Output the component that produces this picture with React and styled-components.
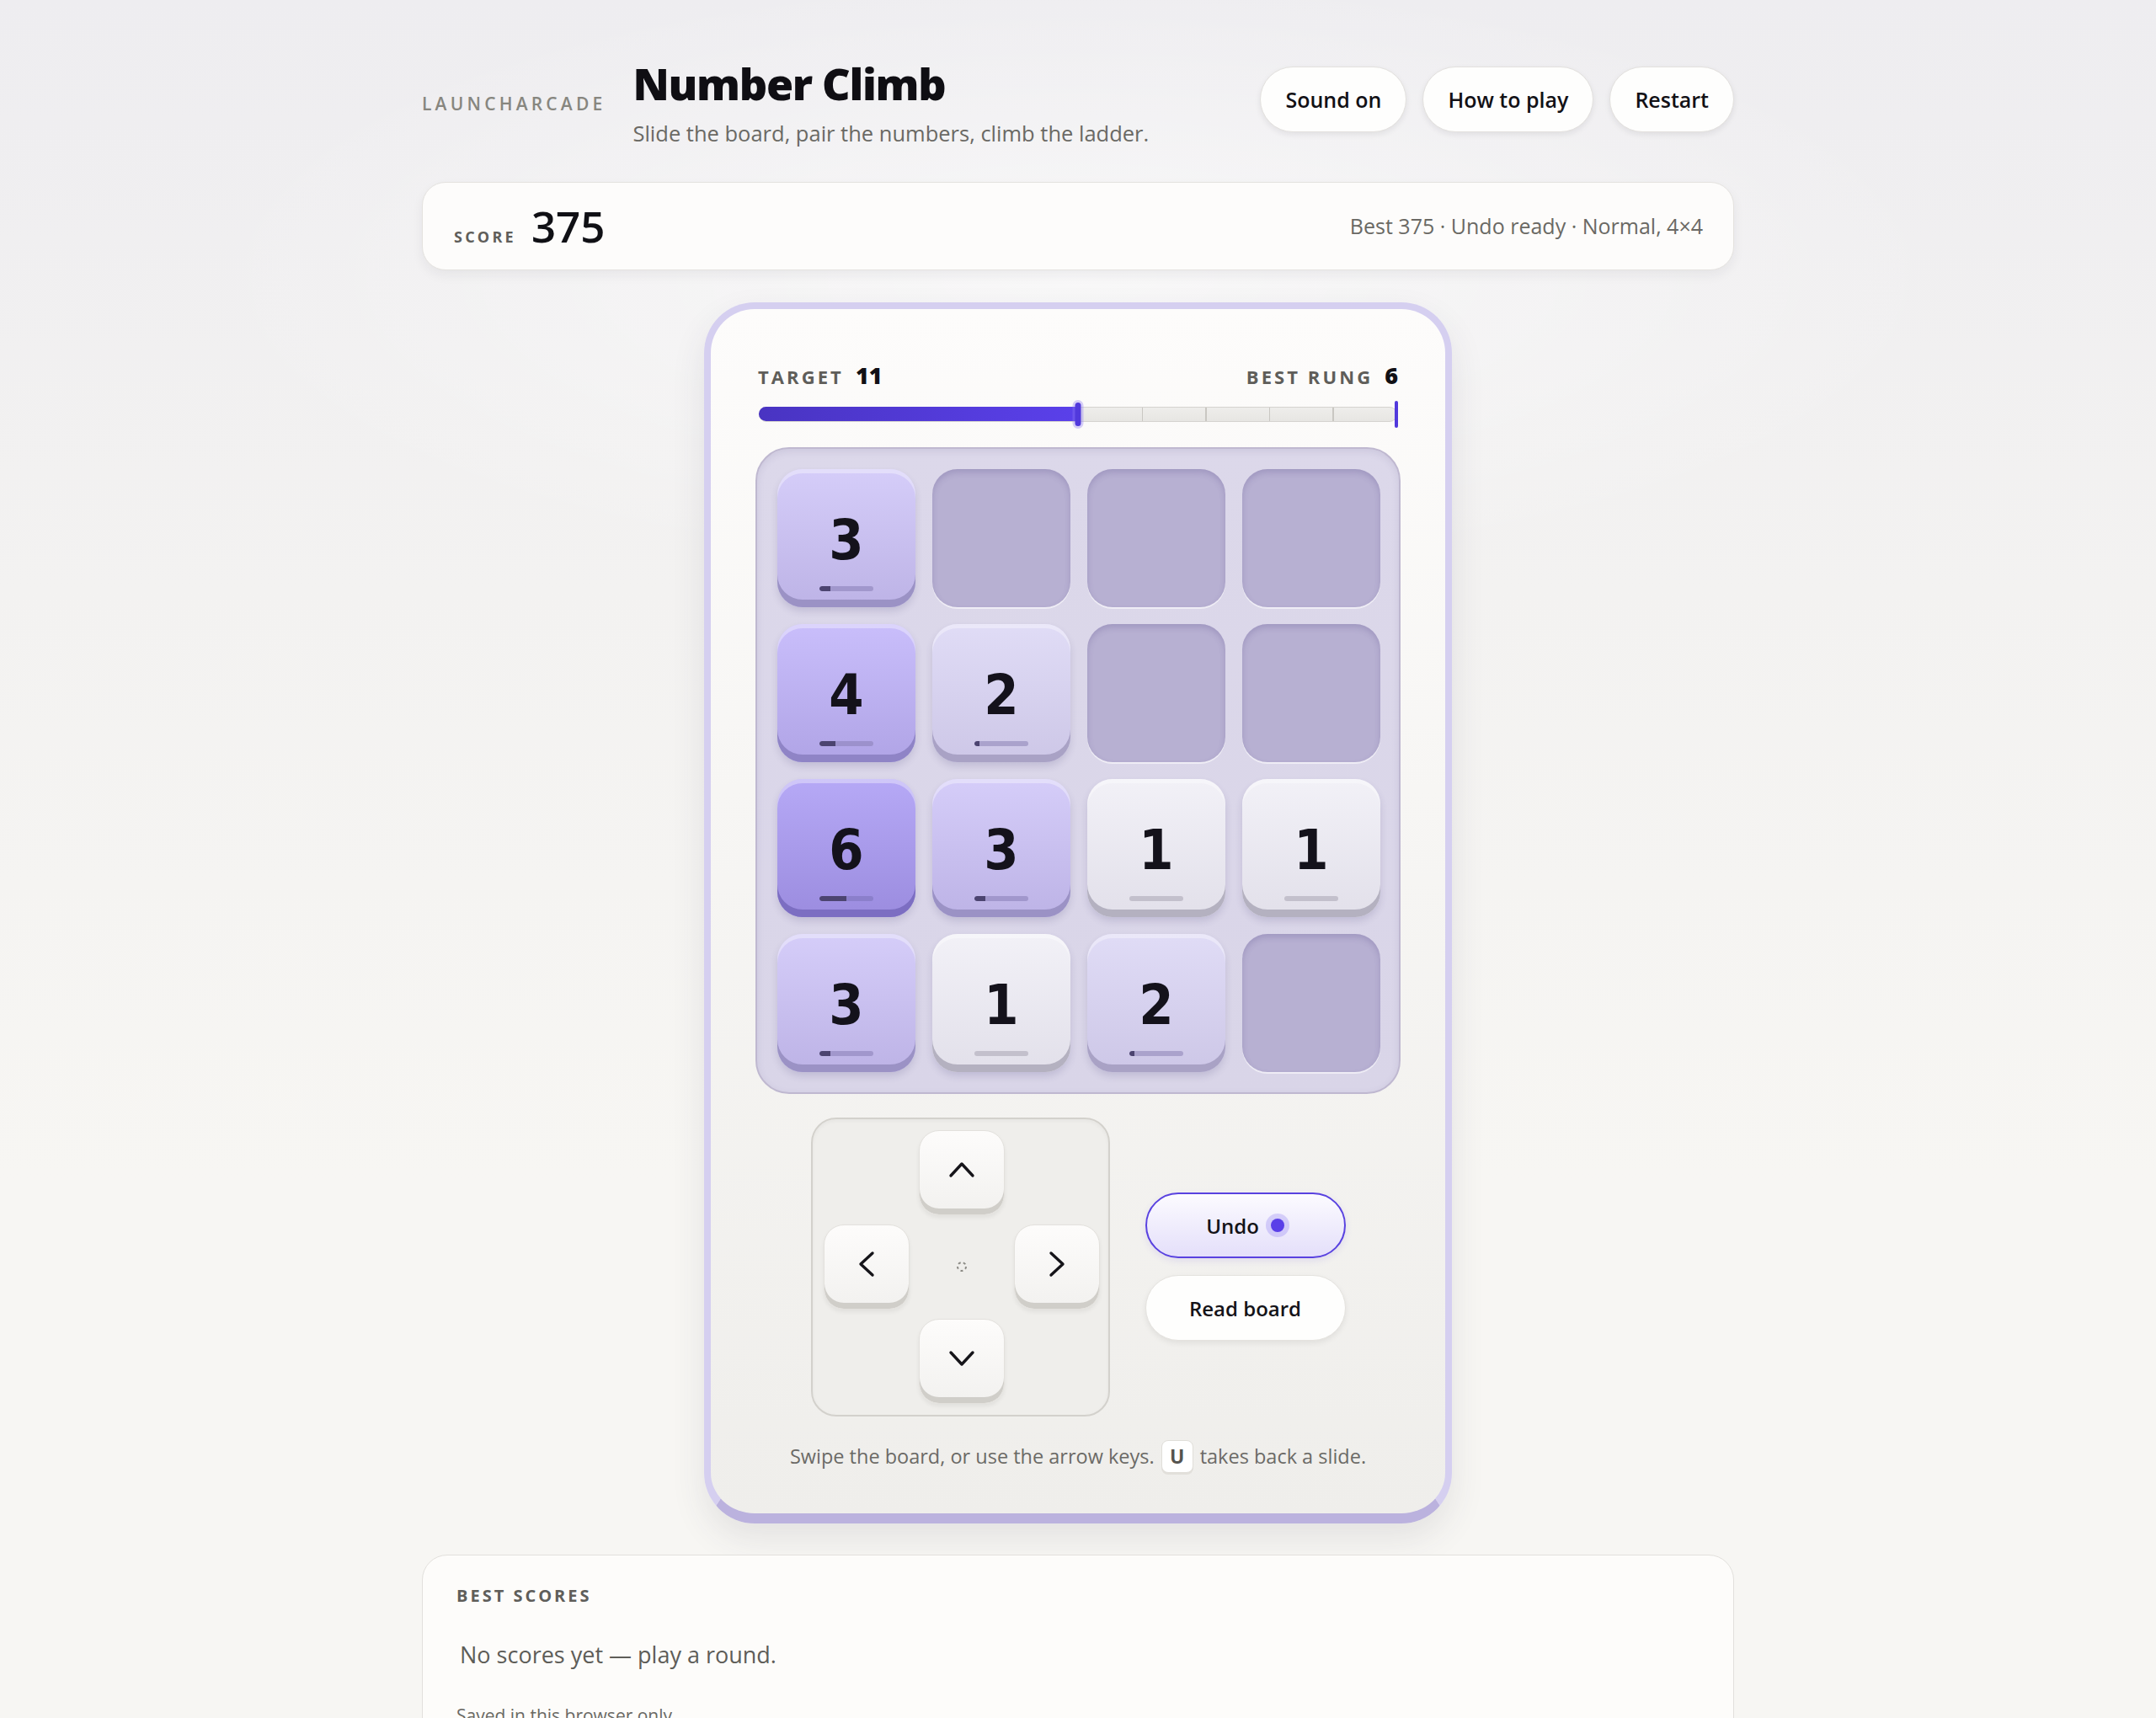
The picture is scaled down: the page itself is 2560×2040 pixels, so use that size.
import React from "react";
import styled, { createGlobalStyle, css } from "styled-components";

const GlobalStyle = createGlobalStyle`
  * { box-sizing: border-box; }
  body {
    margin: 0;
    font-family: "Open Sans", "Noto Sans", sans-serif;
    color: #141318;
    background:
      radial-gradient(ellipse 1500px 520px at 50% 330px, rgba(255, 255, 255, 0.55), rgba(255, 255, 255, 0) 70%),
      linear-gradient(180deg, #eeedf0 0px, #f3f2f1 700px, #f7f6f3 1400px);
    min-height: 2040px;
  }
`;

// value -> face gradient + lip colour
const tileTones = {
  1: { top: "#f2f1f7", bottom: "#e2e0ea", lip: "#b4b1c0", track: "#c3c0cc" },
  2: { top: "#e0dcf6", bottom: "#cdc7e7", lip: "#a9a2c5", track: "#aaa2cc" },
  3: { top: "#d5cdf9", bottom: "#bdb3e6", lip: "#9b92c5", track: "#a197cc" },
  4: { top: "#c9befb", bottom: "#b0a4e6", lip: "#8f84c6", track: "#9c91cc" },
  6: { top: "#b6a9f6", bottom: "#9b8cdf", lip: "#7c6ec2", track: "#8b7fcb" },
};

const board = [
  [3, 0, 0, 0],
  [4, 2, 0, 0],
  [6, 3, 1, 1],
  [3, 1, 2, 0],
];

const Page = styled.div`
  max-width: 1558px;
  margin: 0 auto;
  padding-top: 70px;
`;

const Header = styled.header`
  display: flex;
  align-items: center;
  justify-content: space-between;
`;

const TitleGroup = styled.div`
  display: flex;
  align-items: center;
  gap: 32px;
`;

const Brand = styled.span`
  font-size: 21px;
  font-weight: 600;
  letter-spacing: 0.2em;
  color: #87867f;
`;

const TitleBlock = styled.div`
  display: flex;
  flex-direction: column;
  gap: 14px;
`;

const Title = styled.h1`
  margin: 0;
  font-size: 52px;
  line-height: 1.1;
  font-weight: 800;
  letter-spacing: -0.025em;
  color: #0f0e13;
`;

const Subtitle = styled.p`
  margin: 0;
  font-size: 25.5px;
  line-height: 1.35;
  color: #6a6964;
`;

const Actions = styled.div`
  display: flex;
  gap: 19px;
  margin-bottom: 10px;
`;

const PillButton = styled.button`
  height: 78px;
  padding: 0 29px;
  border-radius: 40px;
  border: 1.5px solid #e3e1de;
  background: #fefefd;
  box-shadow: 0 3px 7px rgba(30, 28, 40, 0.08);
  font-family: inherit;
  font-size: 25px;
  font-weight: 600;
  color: #121116;
`;

const ScoreCard = styled.section`
  margin-top: 40px;
  height: 105px;
  padding: 0 36px 0 37px;
  display: flex;
  align-items: center;
  justify-content: space-between;
  background: #fdfcfb;
  border: 1.5px solid #e4e2df;
  border-radius: 28px;
  box-shadow: 0 6px 14px rgba(40, 36, 50, 0.06);
`;

const ScoreLeft = styled.div`
  display: flex;
  align-items: baseline;
  gap: 18px;
`;

const SmallCaps = styled.span`
  font-size: ${(p) => p.$size || 18}px;
  font-weight: 700;
  letter-spacing: ${(p) => p.$spacing || 0.18}em;
  color: #5f5e5a;
`;

const ScoreValue = styled.span`
  font-size: 51px;
  font-weight: 600;
  line-height: 1;
  color: #101015;
`;

const Meta = styled.span`
  font-size: 25px;
  color: #6a6964;
`;

const GameCard = styled.main`
  width: 888px;
  margin: 38px auto 0;
  padding: 60px 45px 48px;
  border: 8px solid #d5cff0;
  border-bottom-width: 12px;
  border-bottom-color: #bbb2de;
  border-radius: 60px;
  background: linear-gradient(180deg, #fdfcfb 0%, #f7f6f4 40%, #efeeeb 100%);
  box-shadow: 0 18px 40px rgba(60, 55, 80, 0.1);
  display: flex;
  flex-direction: column;
  align-items: center;
`;

const LadderHead = styled.div`
  width: 760px;
  display: flex;
  justify-content: space-between;
  align-items: baseline;
  height: 34px;
`;

const LadderStat = styled.div`
  display: flex;
  align-items: baseline;
  gap: 14px;
`;

const StatValue = styled.span`
  font-size: 27px;
  font-weight: 800;
  color: #111015;
`;

const Track = styled.div`
  position: relative;
  width: 758px;
  height: 18px;
  margin-top: 22px;
  border-radius: 10px;
  background: linear-gradient(180deg, #eeedeb, #e7e6e3);
  border: 1.5px solid #d5d3cf;
`;

const Tick = styled.span`
  position: absolute;
  top: 0;
  bottom: 0;
  width: 1.5px;
  background: #c9c7c2;
`;

const Fill = styled.div`
  position: absolute;
  left: -1.5px;
  top: -0.5px;
  bottom: -0.5px;
  border-radius: 10px 0 0 10px;
  background: linear-gradient(90deg, #4934c2, #5a40ea);
`;

const Marker = styled.span`
  position: absolute;
  top: 50%;
  transform: translate(-50%, -50%);
  border-radius: 4px;
  background: #5139dc;
  ${(p) =>
    p.$halo
      ? css`
          width: 7px;
          height: 28px;
          box-shadow: 0 0 0 3px rgba(140, 120, 240, 0.35);
        `
      : css`
          width: 4px;
          height: 32px;
        `}
`;

const Well = styled.div`
  margin-top: 30px;
  width: 766px;
  padding: 24px;
  display: grid;
  grid-template-columns: repeat(4, 164px);
  grid-auto-rows: 164px;
  gap: 20px;
  background: linear-gradient(180deg, #dcd8ea, #d9d5e8);
  border: 2px solid #bfb8d0;
  border-radius: 40px;
  box-shadow: inset 0 3px 8px rgba(90, 80, 130, 0.12);
`;

const EmptyCell = styled.div`
  border-radius: 30px;
  background: #b7b0d2;
  box-shadow: inset 0 4px 7px rgba(80, 70, 130, 0.22), 0 2px 0 rgba(255, 255, 255, 0.55);
`;

const Tile = styled.div`
  border-radius: 30px;
  padding: 32px 0 19px;
  display: grid;
  grid-template-rows: 1fr 6px;
  justify-items: center;
  align-items: center;
  background: linear-gradient(180deg, ${(p) => p.$tone.top}, ${(p) => p.$tone.bottom});
  box-shadow:
    inset 0 -9px 0 ${(p) => p.$tone.lip},
    inset 0 5px 0 rgba(255, 255, 255, 0.35),
    0 5px 9px rgba(70, 60, 120, 0.16);
`;

const TileValue = styled.span`
  font-family: "DejaVu Sans Condensed", "DejaVu Sans", "Liberation Sans", sans-serif;
  font-size: 66px;
  font-weight: 700;
  line-height: 1;
  color: #14121b;
`;

const TileMeter = styled.span`
  position: relative;
  width: 64px;
  height: 6px;
  border-radius: 3px;
  overflow: hidden;
  background: ${(p) => p.$track};
`;

const TileMeterFill = styled.span`
  display: block;
  height: 100%;
  background: #4c4470;
  border-radius: 3px 0 0 3px;
`;

const Controls = styled.div`
  margin-top: 28px;
  display: flex;
  align-items: center;
  gap: 42px;
`;

const Pad = styled.div`
  width: 355px;
  height: 355px;
  padding: 13px;
  display: grid;
  grid-template-columns: repeat(3, 102px);
  grid-template-rows: repeat(3, 101px);
  gap: 11px;
  place-items: stretch;
  background: #efeeeb;
  border: 2px solid #d3d1cc;
  border-radius: 30px;
  box-shadow: inset 0 2px 5px rgba(0, 0, 0, 0.04);
`;

const PadKey = styled.button`
  grid-column: ${(p) => p.$col};
  grid-row: ${(p) => p.$row};
  display: flex;
  align-items: center;
  justify-content: center;
  padding: 0 0 6px;
  border: 1px solid #e3e1dd;
  border-radius: 24px;
  background: linear-gradient(180deg, #fdfcfb, #f2f1ef);
  box-shadow: inset 0 -7px 0 #d0cec9, 0 3px 5px rgba(0, 0, 0, 0.06);
`;

const PadCenter = styled.div`
  grid-column: 2;
  grid-row: 2;
  display: flex;
  align-items: center;
  justify-content: center;
`;

const SideButtons = styled.div`
  display: flex;
  flex-direction: column;
  gap: 20px;
`;

const SideButton = styled.button`
  width: 238px;
  height: 78px;
  border-radius: 40px;
  display: flex;
  align-items: center;
  justify-content: center;
  gap: 14px;
  font-family: inherit;
  font-size: 24px;
  font-weight: 600;
  color: #141318;
  ${(p) =>
    p.$active
      ? css`
          border: 2.5px solid #5942e0;
          background: linear-gradient(180deg, #fcfbff, #e4dffa);
          box-shadow: 0 3px 8px rgba(90, 66, 224, 0.12);
        `
      : css`
          border: 1.5px solid #e5e3df;
          background: #fefefd;
          box-shadow: 0 3px 7px rgba(0, 0, 0, 0.07);
        `}
`;

const Dot = styled.span`
  width: 16px;
  height: 16px;
  border-radius: 50%;
  background: #5a3fe8;
  box-shadow: 0 0 0 6px rgba(120, 100, 240, 0.25);
`;

const Hint = styled.p`
  margin: 28px 0 0;
  display: flex;
  align-items: center;
  font-size: 23.5px;
  color: #6b6a66;
`;

const Key = styled.kbd`
  margin: 0 8px;
  width: 38px;
  height: 39px;
  display: inline-flex;
  align-items: center;
  justify-content: center;
  font-family: inherit;
  font-size: 23px;
  font-weight: 700;
  color: #55544f;
  background: #fff;
  border: 1.5px solid #e0ded9;
  border-radius: 8px;
  box-shadow: 0 2px 0 #e2e0db;
`;

const ScoresCard = styled.section`
  margin-top: 37px;
  padding: 34px 40px 60px;
  background: #fdfcfa;
  border: 1.5px solid #e2e0dc;
  border-radius: 30px;
`;

const EmptyNote = styled.p`
  margin: 38px 0 0 4px;
  font-size: 27px;
  color: #5e5d58;
`;

const Footnote = styled.p`
  margin: 40px 0 0;
  font-size: 21px;
  color: #6a6964;
`;

const Chevron = ({ dir }) => {
  const rot = { up: 0, right: 90, down: 180, left: 270 }[dir];
  return (
    <svg width="32" height="32" viewBox="0 0 32 32" style={{ transform: `rotate(${rot}deg)` }}>
      <polyline
        points="3,23 16,9 29,23"
        fill="none"
        stroke="#16151a"
        strokeWidth="3.4"
        strokeLinecap="round"
        strokeLinejoin="round"
      />
    </svg>
  );
};

const CenterMark = () => (
  <svg width="16" height="16" viewBox="0 0 16 16">
    <circle cx="8" cy="8" r="5" fill="none" stroke="#8c8b86" strokeWidth="2" strokeDasharray="3 3.2" />
  </svg>
);

const TARGET = 11;
const BEST_RUNG = 6;

export default function App() {
  const progress = ((BEST_RUNG - 1) / (TARGET - 1)) * 100;

  return (
    <>
      <GlobalStyle />
      <Page>
        <Header>
          <TitleGroup>
            <Brand>LAUNCHARCADE</Brand>
            <TitleBlock>
              <Title>Number Climb</Title>
              <Subtitle>Slide the board, pair the numbers, climb the ladder.</Subtitle>
            </TitleBlock>
          </TitleGroup>
          <Actions>
            <PillButton>Sound on</PillButton>
            <PillButton>How to play</PillButton>
            <PillButton>Restart</PillButton>
          </Actions>
        </Header>

        <ScoreCard>
          <ScoreLeft>
            <SmallCaps>SCORE</SmallCaps>
            <ScoreValue>375</ScoreValue>
          </ScoreLeft>
          <Meta>Best 375 · Undo ready · Normal, 4×4</Meta>
        </ScoreCard>

        <GameCard>
          <LadderHead>
            <LadderStat>
              <SmallCaps $size={22} $spacing={0.14}>TARGET</SmallCaps>
              <StatValue>{TARGET}</StatValue>
            </LadderStat>
            <LadderStat>
              <SmallCaps $size={22} $spacing={0.14}>BEST RUNG</SmallCaps>
              <StatValue>{BEST_RUNG}</StatValue>
            </LadderStat>
          </LadderHead>

          <Track>
            {Array.from({ length: 9 }, (_, i) => (
              <Tick key={i} style={{ left: `${(i + 1) * 10}%` }} />
            ))}
            <Fill style={{ width: `${progress}%` }} />
            <Marker $halo style={{ left: `${progress}%` }} />
            <Marker style={{ left: "100%" }} />
          </Track>

          <Well>
            {board.flat().map((v, i) => {
              if (!v) return <EmptyCell key={i} />;
              const tone = tileTones[v];
              return (
                <Tile key={i} $tone={tone}>
                  <TileValue>{v}</TileValue>
                  <TileMeter $track={tone.track}>
                    <TileMeterFill style={{ width: `${((v - 1) / (TARGET - 1)) * 100}%` }} />
                  </TileMeter>
                </Tile>
              );
            })}
          </Well>

          <Controls>
            <Pad>
              <PadKey $col={2} $row={1} aria-label="Up">
                <Chevron dir="up" />
              </PadKey>
              <PadKey $col={1} $row={2} aria-label="Left">
                <Chevron dir="left" />
              </PadKey>
              <PadCenter>
                <CenterMark />
              </PadCenter>
              <PadKey $col={3} $row={2} aria-label="Right">
                <Chevron dir="right" />
              </PadKey>
              <PadKey $col={2} $row={3} aria-label="Down">
                <Chevron dir="down" />
              </PadKey>
            </Pad>
            <SideButtons>
              <SideButton $active>
                Undo <Dot />
              </SideButton>
              <SideButton>Read board</SideButton>
            </SideButtons>
          </Controls>

          <Hint>
            Swipe the board, or use the arrow keys.<Key>U</Key>takes back a slide.
          </Hint>
        </GameCard>

        <ScoresCard>
          <SmallCaps $size={20} $spacing={0.15}>BEST SCORES</SmallCaps>
          <EmptyNote>No scores yet — play a round.</EmptyNote>
          <Footnote>Saved in this browser only.</Footnote>
        </ScoresCard>
      </Page>
    </>
  );
}
